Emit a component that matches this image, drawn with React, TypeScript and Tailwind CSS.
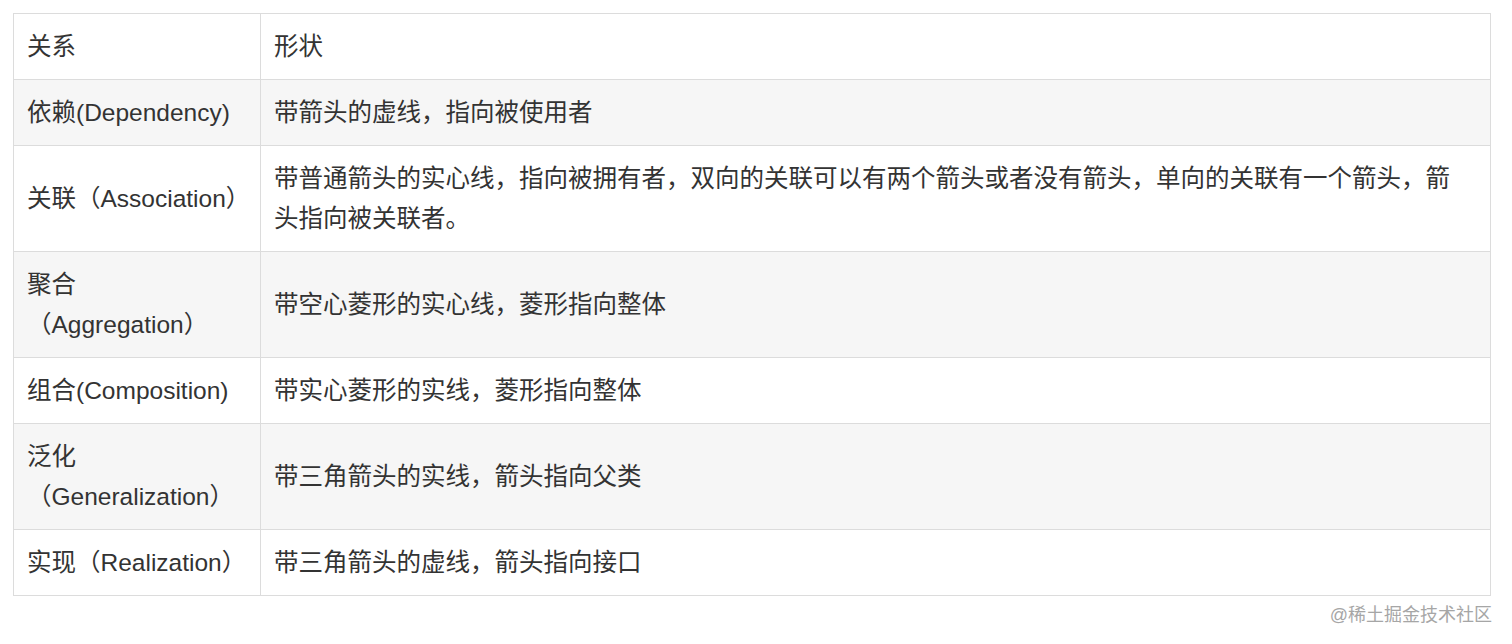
import React from "react";

const rows: { a: React.ReactNode; b: React.ReactNode; gray: boolean }[] = [
  { a: "关系", b: "形状", gray: false },
  { a: "依赖(Dependency)", b: "带箭头的虚线，指向被使用者", gray: true },
  {
    a: "关联（Association）",
    b: (
      <>
        带普通箭头的实心线，指向被拥有者，双向的关联可以有两个箭头或者没有箭头，单向的关联有一个箭头，箭
        <br />
        头指向被关联者。
      </>
    ),
    gray: false,
  },
  {
    a: (
      <>
        聚合
        <br />
        （Aggregation）
      </>
    ),
    b: "带空心菱形的实心线，菱形指向整体",
    gray: true,
  },
  { a: "组合(Composition)", b: "带实心菱形的实线，菱形指向整体", gray: false },
  {
    a: (
      <>
        泛化
        <br />
        （Generalization）
      </>
    ),
    b: "带三角箭头的实线，箭头指向父类",
    gray: true,
  },
  { a: "实现（Realization）", b: "带三角箭头的虚线，箭头指向接口", gray: false },
];

export default function App() {
  return (
    <div
      className="w-[1512px] h-[644px] bg-white overflow-hidden"
      style={{ fontFamily: '"Liberation Sans", "Noto Sans CJK SC", sans-serif' }}
    >
      <div className="pt-[13px] pl-[13px]">
        <table className="w-[1478px] border-collapse text-[24.5px] leading-[40px] text-[#333333] table-fixed">
          <colgroup>
            <col className="w-[247px]" />
            <col />
          </colgroup>
          <tbody>
            {rows.map((r, i) => (
              <tr key={i} className={r.gray ? "bg-[#f6f6f6]" : "bg-white"}>
                <td className="border border-[#dcdcdc] px-[13px] py-[12.5px] align-middle">{r.a}</td>
                <td className="border border-[#dcdcdc] px-[13px] py-[12.5px] align-middle whitespace-nowrap">{r.b}</td>
              </tr>
            ))}
          </tbody>
        </table>
        <div className="w-[1479px] flex justify-end pt-[6px] text-[18px] leading-[26px] text-[#a6a6a6]">
          @稀土掘金技术社区
        </div>
      </div>
    </div>
  );
}
